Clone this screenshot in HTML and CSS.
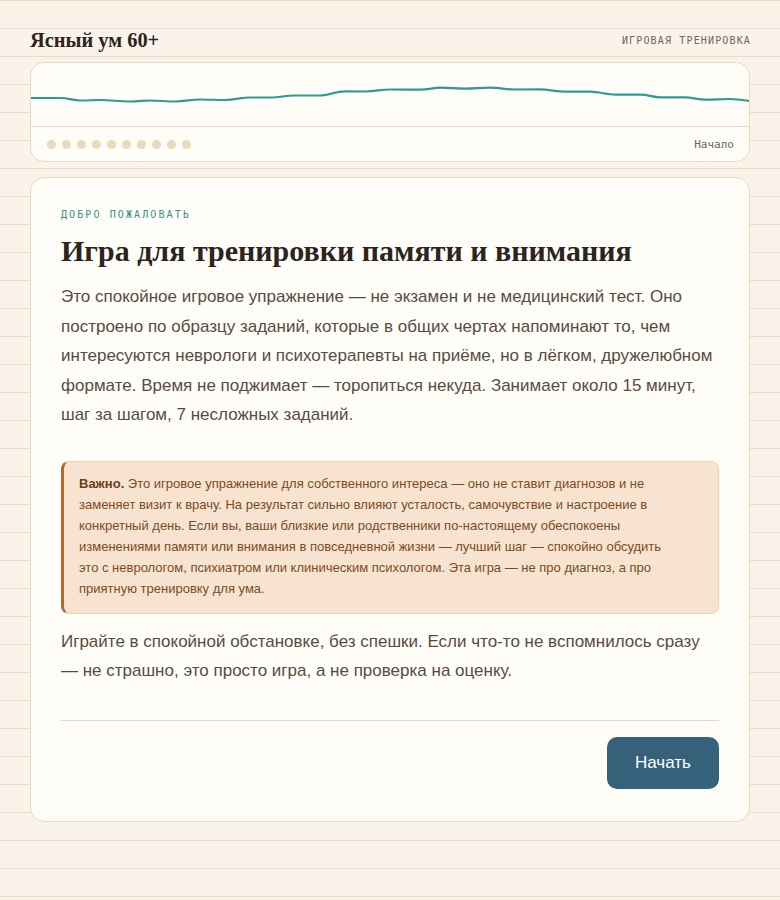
FILE: index.html
```html
<!DOCTYPE html>
<html lang="ru">
<head>
<meta charset="utf-8">
<title>Ясный ум 60+</title>
<link rel="stylesheet" href="styles.css">
</head>
<body>
<div class="page">
  <header class="topbar">
    <div class="brand">Ясный ум 60+</div>
    <div class="tag">ИГРОВАЯ ТРЕНИРОВКА</div>
  </header>

  <section class="progress">
    <div class="wave">
      <svg viewBox="0 0 718 64" preserveAspectRatio="none" width="718" height="64">
        <path d="M0 35 L29 35 C38 35 42 37.5 49 37.5 C58 37.5 62 37 69 37 C80 37 88 38.5 99 38.5 C108 38.5 112 37.5 119 37.5 C128 37.5 135 38.5 144 38.5 C154 38.5 160 36.5 169 36.5 C178 36.5 186 37 194 37 C204 37 210 34.5 219 34.5 L239 34.5 C248 34.5 255 32.5 264 32.5 L289 32.5 C298 32.5 304 28.3 314 28.3 L334 28.5 C344 28.5 350 26.5 359 26.5 C368 26.5 380 26.7 389 26.7 C398 26.7 402 24.7 409 24.7 C418 24.7 425 25.7 434 25.7 C443 25.7 450 24.7 459 24.7 C468 24.7 475 26.5 484 26.5 L509 26.3 C518 26.3 526 28.7 534 28.7 L559 28.7 C568 28.7 576 31.7 584 31.7 L609 31.7 C618 31.7 622 34.3 629 34.3 L654 34.3 C662 34.3 667 36.7 674 36.7 C683 36.7 690 36 699 36 C708 36 712 37 718 38" fill="none" stroke="#2f9b91" stroke-width="2.2" stroke-linecap="round" stroke-linejoin="round"/>
      </svg>
    </div>
    <div class="progress-foot">
      <div class="dots">
        <span class="dot"></span><span class="dot"></span><span class="dot"></span><span class="dot"></span><span class="dot"></span>
        <span class="dot"></span><span class="dot"></span><span class="dot"></span><span class="dot"></span><span class="dot"></span>
      </div>
      <div class="stage">Начало</div>
    </div>
  </section>

  <main class="card">
    <div class="eyebrow">ДОБРО ПОЖАЛОВАТЬ</div>
    <h1 class="title">Игра для тренировки памяти и внимания</h1>
    <p class="lead">Это спокойное игровое упражнение — не экзамен и не медицинский тест. Оно построено по образцу заданий, которые в общих чертах напоминают то, чем интересуются неврологи и психотерапевты на приёме, но в лёгком, дружелюбном формате. Время не поджимает — торопиться некуда. Занимает около 15 минут, шаг за шагом, 7 несложных заданий.</p>
    <div class="note"><strong>Важно.</strong> Это игровое упражнение для собственного интереса — оно не ставит диагнозов и не заменяет визит к врачу. На результат сильно влияют усталость, самочувствие и настроение в конкретный день. Если вы, ваши близкие или родственники по-настоящему обеспокоены изменениями памяти или внимания в повседневной жизни — лучший шаг — спокойно обсудить это с неврологом, психиатром или клиническим психологом. Эта игра — не про диагноз, а про приятную тренировку для ума.</div>
    <p class="lead after">Играйте в спокойной обстановке, без спешки. Если что-то не вспомнилось сразу — не страшно, это просто игра, а не проверка на оценку.</p>
    <div class="actions">
      <button class="btn" type="button">Начать</button>
    </div>
  </main>
</div>
</body>
</html>
```

FILE: styles.css
```css
* { box-sizing: border-box; }

html, body {
  margin: 0;
  padding: 0;
}

body {
  background-color: #faf3ea;
  background-image: linear-gradient(#ecdcc4 1px, transparent 1px);
  background-size: 100% 28px;
  font-family: "Liberation Sans", Arial, sans-serif;
  color: #5a4b3f;
  min-height: 900px;
}

.page {
  padding: 28px 30px 40px;
}

.topbar {
  display: flex;
  justify-content: space-between;
  align-items: center;
  height: 24px;
  margin-bottom: 10px;
}

.brand {
  font-family: "Liberation Serif", "Times New Roman", serif;
  font-weight: bold;
  font-size: 20.4px;
  color: #2c241d;
  line-height: 24px;
}

.tag {
  font-family: "DejaVu Sans Mono", monospace;
  font-size: 10px;
  letter-spacing: 1.15px;
  color: #706459;
  margin-right: -1px;
}

.progress {
  background: #fffdf8;
  border: 1px solid #ead8bd;
  border-radius: 14px;
  overflow: hidden;
}

.wave {
  height: 64px;
  border-bottom: 1px solid #ead8bd;
}

.wave svg {
  display: block;
  width: 100%;
  height: 64px;
}

.progress-foot {
  display: flex;
  justify-content: space-between;
  align-items: center;
  height: 34px;
  padding: 0 15px 0 16px;
}

.dots {
  display: flex;
  gap: 6px;
}

.dot {
  width: 9px;
  height: 9px;
  border-radius: 50%;
  background: #e9d9bd;
}

.stage {
  font-family: "DejaVu Sans Mono", monospace;
  font-size: 11px;
  color: #6e6258;
}

.card {
  margin-top: 15px;
  background: #fffdf8;
  border: 1px solid #ead8bd;
  border-radius: 14px;
  padding: 30px 30px 32px;
}

.eyebrow {
  font-family: "DejaVu Sans Mono", monospace;
  font-size: 10px;
  line-height: 14px;
  letter-spacing: 2.1px;
  color: #3e8f87;
}

.title {
  margin: 11px 0 14px;
  font-family: "Liberation Serif", "Times New Roman", serif;
  font-weight: bold;
  font-size: 30px;
  line-height: 35px;
  color: #2c241d;
}

.lead {
  margin: 0;
  font-size: 17px;
  line-height: 29.5px;
  color: #5a4b3f;
}

.note {
  margin: 31px 0 13px;
  background: #f7e3cf;
  border: 1px solid #ecd3b2;
  border-left: 3px solid #b8652e;
  border-radius: 8px;
  padding: 11px 38px 14px 15px;
  font-size: 13px;
  line-height: 21px;
  color: #7b4b26;
}

.note strong {
  color: #6b3d1c;
}

.after {
  margin-bottom: 34px;
}

.actions {
  border-top: 1px solid #ead8bd;
  padding-top: 16px;
  display: flex;
  justify-content: flex-end;
}

.btn {
  font-family: "Liberation Sans", Arial, sans-serif;
  font-size: 17px;
  line-height: 20px;
  color: #ffffff;
  background: #35627a;
  border: none;
  border-radius: 10px;
  height: 52px;
  width: 112px;
  padding: 0;
  cursor: pointer;
}
```
